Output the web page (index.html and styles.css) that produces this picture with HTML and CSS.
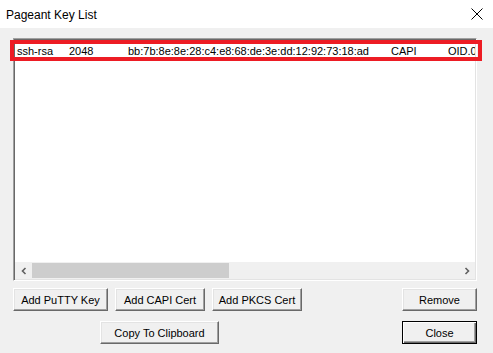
FILE: index.html
```html
<!DOCTYPE html>
<html lang="en">
<head>
  <meta charset="UTF-8" />
  <title>Pageant Key List</title>
  <link rel="stylesheet" href="styles.css">
</head>
<body>
  <div class="window">

    <!-- title bar -->
    <div class="titlebar">
      <span class="title">Pageant Key List</span>
      <svg class="close-x" width="12" height="12" viewBox="0 0 12 12">
        <path d="M0.5 0.5 L11.5 11.5 M11.5 0.5 L0.5 11.5" stroke="#000" stroke-width="1" fill="none"/>
      </svg>
    </div>

    <div class="content">
      <!-- key list -->
      <div class="listbox">
        <div class="rows">
          <div class="row">
            <span>ssh-rsa</span>
            <span>2048</span>
            <span>bb:7b:8e:8e:28:c4:e8:68:de:3e:dd:12:92:73:18:ad</span>
            <span>CAPI</span>
            <span>OID.0</span>
          </div>
        </div>
        <div class="hscroll">
          <div class="arrow">
            <svg width="8" height="8" viewBox="0 0 8 8"><path d="M5.5 1 L2.5 4 L5.5 7" stroke="#606060" stroke-width="1.6" fill="none"/></svg>
          </div>
          <div class="track"><div class="thumb"></div></div>
          <div class="arrow">
            <svg width="8" height="8" viewBox="0 0 8 8"><path d="M2.5 1 L5.5 4 L2.5 7" stroke="#606060" stroke-width="1.6" fill="none"/></svg>
          </div>
        </div>
      </div>

      <!-- highlight marker drawn over the first row -->
      <div class="marker"></div>

      <div class="btn-row">
        <button class="btn w-putty">Add PuTTY Key</button>
        <button class="btn w-cert">Add CAPI Cert</button>
        <button class="btn w-cert">Add PKCS Cert</button>
        <button class="btn w-small push">Remove</button>
      </div>

      <div class="btn-row second">
        <button class="btn w-copy">Copy To Clipboard</button>
        <button class="btn w-small push default">Close</button>
      </div>
    </div>
  </div>
</body>
</html>
```

FILE: styles.css
```css
body {
  margin: 0;
  padding: 0;
  background: #f0f0f0;
  font-family: 'Liberation Sans', Arial, sans-serif;
  font-size: 11px;
  color: #000;
}

.window {
  width: 493px;
  height: 353px;
  background: #f0f0f0;
  overflow: hidden;
  position: relative;
}

.titlebar {
  height: 28px;
  background: #fff;
  display: flex;
  align-items: center;
  justify-content: space-between;
  padding: 0 10px 0 6px;
}

.title {
  font-size: 12px;
  font-family: 'Liberation Sans', Arial, sans-serif;
  color: #000;
  padding-top: 1px;
}

.close-x {
  margin-top: 0;
}

.content {
  padding: 10px 16px 0 13px;
}

.listbox {
  height: 243px;
  box-sizing: border-box;
  background: #fff;
  border: 1px solid;
  border-color: #a0a0a0 #fff #fff #a0a0a0;
  box-shadow: inset 1px 1px #696969, inset -1px -1px #e3e3e3;
  padding: 1px;
  display: flex;
  flex-direction: column;
}

.rows {
  flex: 1;
  overflow: hidden;
}

.row {
  display: grid;
  grid-template-columns: 52px 59px 263px 57px 60px;
  height: 17px;
  line-height: 17px;
  margin-top: 3px;
  padding-left: 2px;
  white-space: nowrap;
  overflow: hidden;
}

.hscroll {
  height: 17px;
  display: flex;
  background: #f0f0f0;
}

.arrow {
  width: 17px;
  display: flex;
  align-items: center;
  justify-content: center;
}

.track {
  flex: 1;
}

.thumb {
  width: 197px;
  height: 15px;
  margin-top: 1px;
  background: #cdcdcd;
}

.marker {
  position: absolute;
  left: 10px;
  top: 40px;
  width: 472px;
  height: 21px;
  box-sizing: border-box;
  border: 4px solid #ed1c24;
}

.btn-row {
  display: flex;
  gap: 7px;
  margin-top: 7px;
}

.btn-row.second {
  margin-top: 10px;
  padding-left: 87px;
}

.btn {
  height: 23px;
  box-sizing: border-box;
  background: #f0f0f0;
  border: 1px solid;
  border-color: #fff #696969 #696969 #fff;
  box-shadow: inset -1px -1px #a0a0a0, inset 1px 1px #e3e3e3;
  font-family: 'Liberation Sans', Arial, sans-serif;
  font-size: 11px;
  color: #000;
  padding: 0;
}

.btn.default {
  border-color: #000;
  box-shadow: inset 1px 1px #fff, inset -1px -1px #696969, inset -2px -2px #a0a0a0;
}

.w-putty { width: 95px; }
.w-cert { width: 90px; }
.w-small { width: 75px; }
.w-copy { width: 119px; }

.push {
  margin-left: auto;
}
```
